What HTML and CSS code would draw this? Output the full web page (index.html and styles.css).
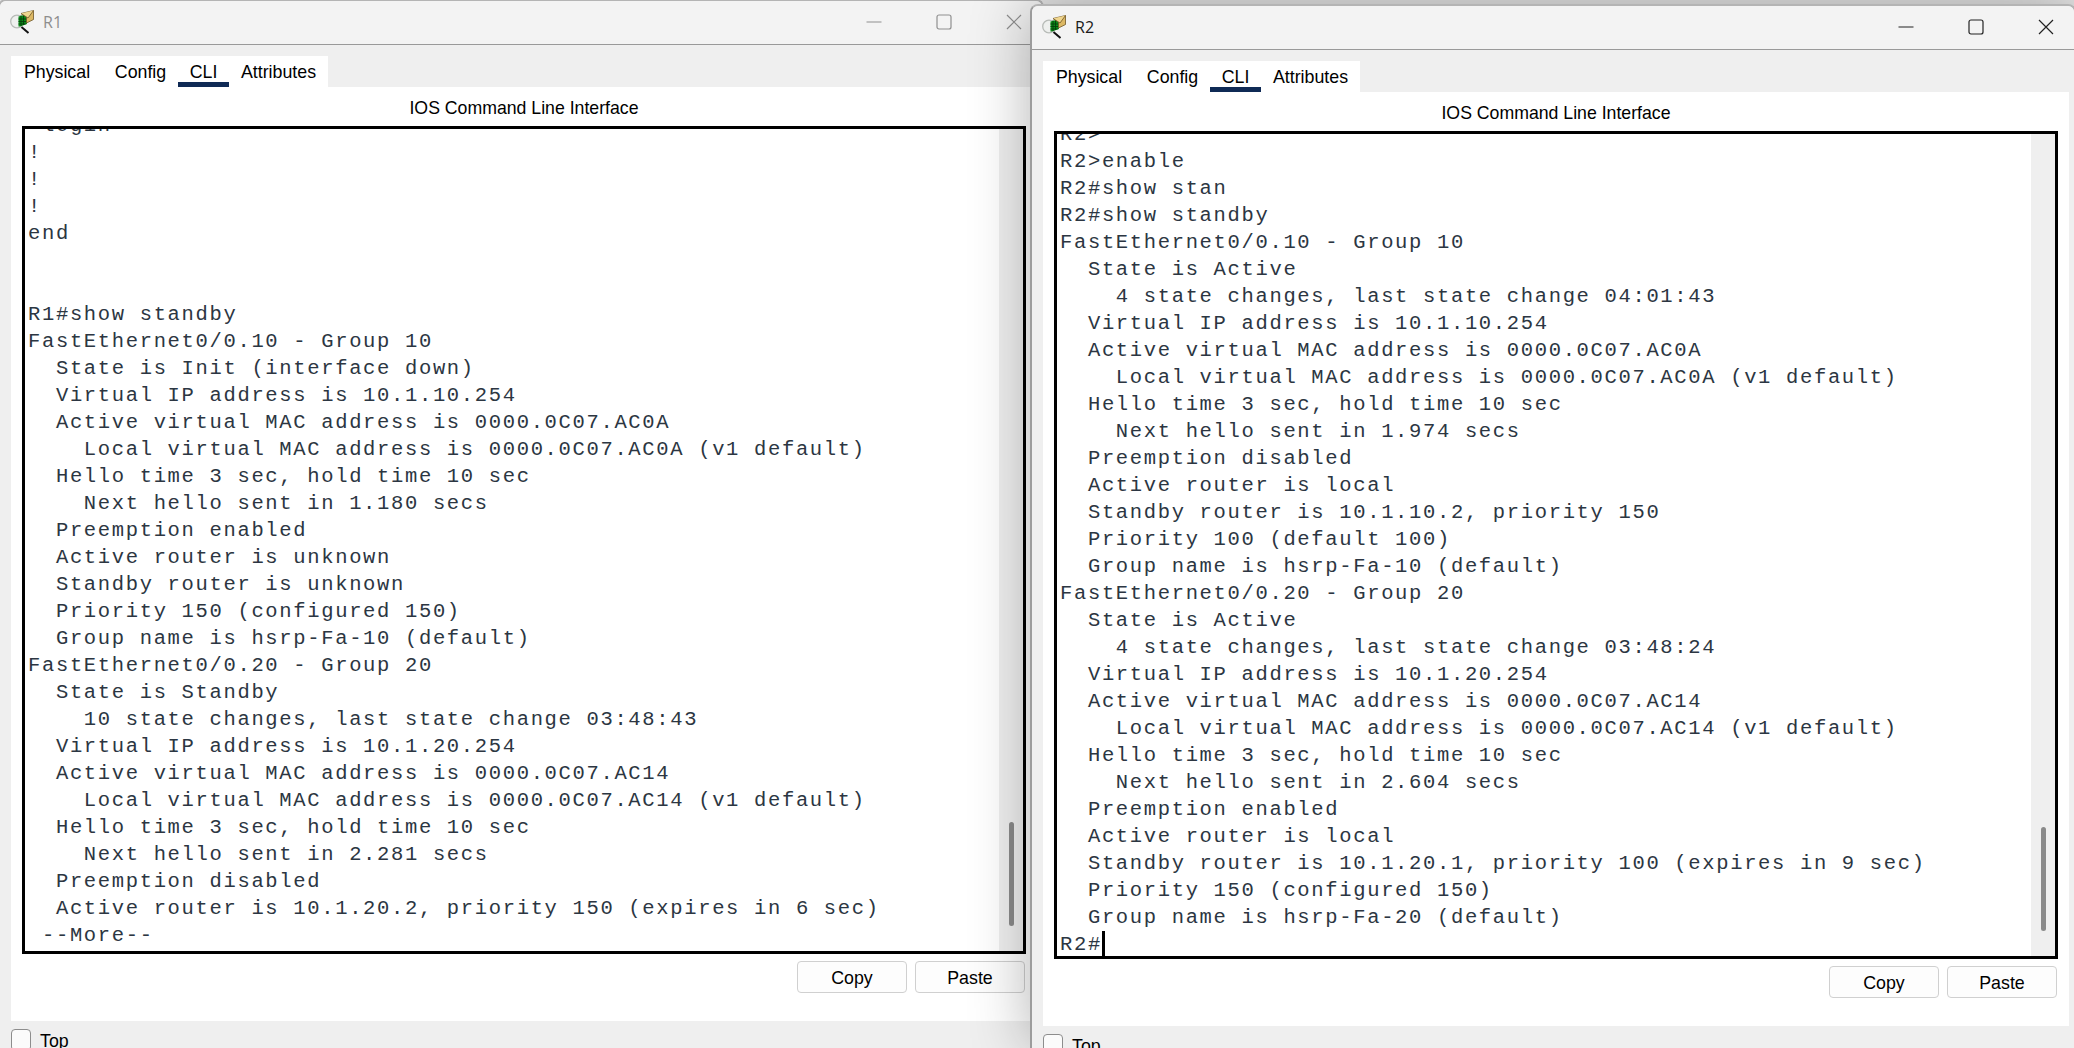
FILE: index.html
```html
<!DOCTYPE html>
<html lang="en">
<head>
<meta charset="utf-8">
<title>R1 and R2</title>
<link rel="stylesheet" href="styles.css">
</head>
<body>
<svg class="defs" width="0" height="0" aria-hidden="true">
  <symbol id="pt-icon" viewBox="0 0 24 24">
    <circle cx="7" cy="11.5" r="6.3" fill="#eef0ee" stroke="#b8bcb8" stroke-width="1.3"/>
    <path d="M11.5 17l7 6" stroke="#111" stroke-width="2" fill="none"/>
    <path d="M8.5 6.5L17 4V14L10 16.5H8.5Z" fill="#0b8a18"/>
    <path d="M8.5 9h8M8.5 11.5h8M8.5 14h7M11 5.5V16M13.5 5V15" stroke="#04400a" stroke-width=".9" fill="none"/>
    <path d="M11 3.5L23.5 0.5V9.5L16.5 13V6.5Z" fill="#dcb864" stroke="#6e5526" stroke-width=".8" stroke-linejoin="round"/>
    <path d="M11 3.5L18 8L23.5 0.5" fill="#efd58e" stroke="#6e5526" stroke-width=".8"/>
  </symbol>
</svg>

<section class="window inactive win-r1">
  <header class="titlebar">
    <svg class="app-icon"><use href="#pt-icon"/></svg>
    <span class="win-title">R1</span>
    <div class="controls">
      <svg class="ctl" viewBox="0 0 16 16"><path d="M0.5 8h15"/></svg>
      <svg class="ctl" viewBox="0 0 16 16"><rect x="1" y="1" width="14" height="14" rx="2"/></svg>
      <svg class="ctl" viewBox="0 0 16 16"><path d="M1 1l14 14M15 1L1 15"/></svg>
    </div>
  </header>
  <div class="win-body">
    <nav class="tabs">
      <span class="tab tab-phys">Physical</span>
      <span class="tab tab-conf">Config</span>
      <span class="tab tab-cli">CLI</span>
      <span class="tab tab-attr">Attributes</span>
    </nav>
    <div class="panel">
      <h2 class="panel-title">IOS Command Line Interface</h2>
      <div class="terminal">
<pre class="term-text r1-text"> login
!
!
!
end


R1#show standby
FastEthernet0/0.10 - Group 10
  State is Init (interface down)
  Virtual IP address is 10.1.10.254
  Active virtual MAC address is 0000.0C07.AC0A
    Local virtual MAC address is 0000.0C07.AC0A (v1 default)
  Hello time 3 sec, hold time 10 sec
    Next hello sent in 1.180 secs
  Preemption enabled
  Active router is unknown
  Standby router is unknown
  Priority 150 (configured 150)
  Group name is hsrp-Fa-10 (default)
FastEthernet0/0.20 - Group 20
  State is Standby
    10 state changes, last state change 03:48:43
  Virtual IP address is 10.1.20.254
  Active virtual MAC address is 0000.0C07.AC14
    Local virtual MAC address is 0000.0C07.AC14 (v1 default)
  Hello time 3 sec, hold time 10 sec
    Next hello sent in 2.281 secs
  Preemption disabled
  Active router is 10.1.20.2, priority 150 (expires in 6 sec)
 --More--</pre>
        <div class="scrollbar"><div class="thumb"></div></div>
      </div>
      <div class="actions">
        <button class="btn">Copy</button>
        <button class="btn">Paste</button>
      </div>
    </div>
    <label class="topbar"><span class="check"></span><span class="top-label">Top</span></label>
  </div>
</section>

<section class="window win-r2">
  <header class="titlebar">
    <svg class="app-icon"><use href="#pt-icon"/></svg>
    <span class="win-title">R2</span>
    <div class="controls">
      <svg class="ctl" viewBox="0 0 16 16"><path d="M0.5 8h15"/></svg>
      <svg class="ctl" viewBox="0 0 16 16"><rect x="1" y="1" width="14" height="14" rx="2"/></svg>
      <svg class="ctl" viewBox="0 0 16 16"><path d="M1 1l14 14M15 1L1 15"/></svg>
    </div>
  </header>
  <div class="win-body">
    <nav class="tabs">
      <span class="tab tab-phys">Physical</span>
      <span class="tab tab-conf">Config</span>
      <span class="tab tab-cli">CLI</span>
      <span class="tab tab-attr">Attributes</span>
    </nav>
    <div class="panel">
      <h2 class="panel-title">IOS Command Line Interface</h2>
      <div class="terminal">
<pre class="term-text r2-text">R2&gt;
R2&gt;enable
R2#show stan
R2#show standby
FastEthernet0/0.10 - Group 10
  State is Active
    4 state changes, last state change 04:01:43
  Virtual IP address is 10.1.10.254
  Active virtual MAC address is 0000.0C07.AC0A
    Local virtual MAC address is 0000.0C07.AC0A (v1 default)
  Hello time 3 sec, hold time 10 sec
    Next hello sent in 1.974 secs
  Preemption disabled
  Active router is local
  Standby router is 10.1.10.2, priority 150
  Priority 100 (default 100)
  Group name is hsrp-Fa-10 (default)
FastEthernet0/0.20 - Group 20
  State is Active
    4 state changes, last state change 03:48:24
  Virtual IP address is 10.1.20.254
  Active virtual MAC address is 0000.0C07.AC14
    Local virtual MAC address is 0000.0C07.AC14 (v1 default)
  Hello time 3 sec, hold time 10 sec
    Next hello sent in 2.604 secs
  Preemption enabled
  Active router is local
  Standby router is 10.1.20.1, priority 100 (expires in 9 sec)
  Priority 150 (configured 150)
  Group name is hsrp-Fa-20 (default)
R2#<span class="cursor"></span></pre>
        <div class="scrollbar"><div class="thumb"></div></div>
      </div>
      <div class="actions">
        <button class="btn">Copy</button>
        <button class="btn">Paste</button>
      </div>
    </div>
    <label class="topbar"><span class="check"></span><span class="top-label">Top</span></label>
  </div>
</section>
</body>
</html>
```
FILE: styles.css
```css
* { box-sizing: border-box; }
html, body { margin: 0; padding: 0; width: 2074px; height: 1048px; overflow: hidden; background: #e4e4e4; }
body { position: relative; font-family: "Liberation Sans", Arial, sans-serif; color: #000; }
.defs { position: absolute; }

.window {
  position: absolute;
  width: 1046px;
  border: 2px solid #b4b4b4;
  border-bottom: 0;
  border-radius: 8px 8px 0 0;
  background: #efefef;
  overflow: hidden;
}
.win-r1 { left: -2px; top: -1px; height: 1049px; }
.win-r2 { left: 1030px; top: 4px; height: 1044px; box-shadow: 0 0 60px rgba(0, 0, 0, .3); border-left-color: #9c9c9c; }

.titlebar {
  display: flex;
  align-items: center;
  height: 44px;
  background: #f3f3f3;
  border-bottom: 1px solid #999;
  padding: 0 0 2px 10px;
}
.app-icon { width: 24px; height: 24px; flex: none; }
.win-title { margin-left: 9px; font: 16px "Open Sans", sans-serif; color: #1a1a1a; }
.inactive .win-title { color: #8e8e8e; }
.controls { margin-left: auto; display: flex; gap: 54px; padding-right: 20px; }
.ctl { width: 16px; height: 16px; fill: none; stroke: #222; stroke-width: 1.2; }
.inactive .ctl { stroke: #8f8f8f; }

.win-body { padding: 11px 5px 0 11px; }
.tabs { display: flex; height: 31px; width: 317px; background: #fff; }
.tab { height: 31px; padding-top: 1px; line-height: 30px; font-size: 17.8px; text-align: center; white-space: nowrap; }
.tab-phys { width: 92px; }
.tab-conf { width: 75px; }
.tab-cli { width: 51px; border-bottom: 5px solid #0f2a55; }
.tab-attr { width: 99px; }

.panel { width: 1026px; height: 934px; background: #fff; padding: 0 11px; }
.panel-title { margin: 0; height: 39px; padding-top: 4px; line-height: 35px; font-size: 17.7px; font-weight: 400; text-align: center; }

.terminal {
  position: relative;
  height: 828px;
  border: 3px solid #000;
  overflow: hidden;
  background: #fff;
}
.term-text {
  margin: 0;
  padding-left: 3px;
  font: 20.5px/27px "Liberation Mono", "Courier New", monospace;
  letter-spacing: 1.66px;
  color: #2c3642;
}
.r1-text { margin-top: -17px; }
.r2-text { margin-top: -13px; }
.cursor { display: inline-block; width: 3px; height: 27px; background: #000; vertical-align: top; }

.scrollbar { position: absolute; right: 0; top: 0; bottom: 0; width: 24px; background: #efefef; }
.thumb { position: absolute; left: 10px; top: 693px; width: 5px; height: 104px; border-radius: 3px; background: #8a8a8a; }

.actions { display: flex; justify-content: flex-end; gap: 8px; padding: 7px 1px 0 0; }
.btn {
  width: 110px; height: 32px; padding: 2px 0 0;
  background: #fdfdfd; border: 1px solid #d0d0d0; border-radius: 4px;
  font: 17.8px "Liberation Sans", Arial, sans-serif; color: #000;
}

.topbar { display: flex; align-items: flex-start; gap: 9px; padding-top: 8px; height: 30px; }
.check { width: 20px; height: 22px; border: 1px solid #8d8d8d; border-radius: 4px; background: #fbfbfb; flex: none; }
.top-label { font-size: 17.8px; line-height: 20px; margin-top: 2px; }
```
